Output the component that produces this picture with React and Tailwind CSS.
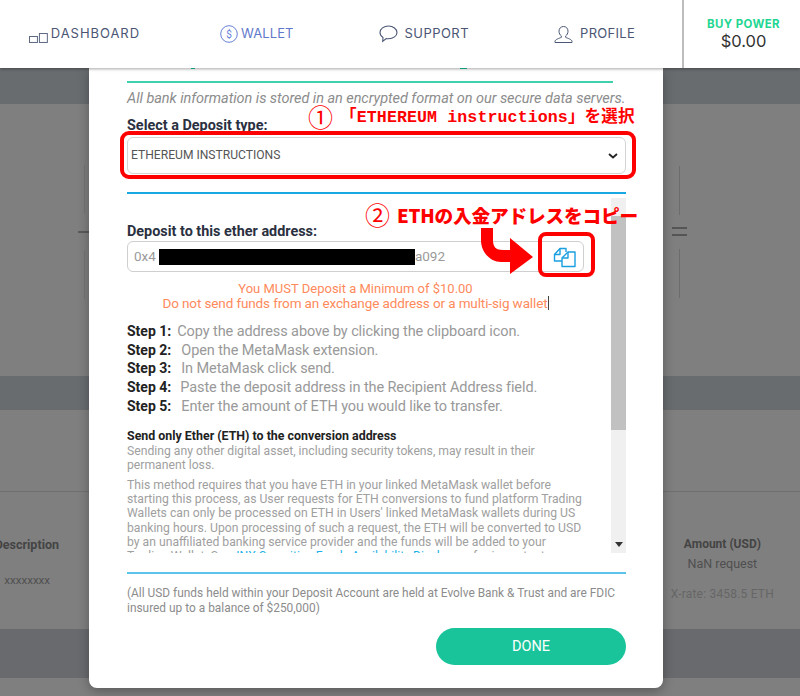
import React from "react";

const F = { fontFamily: '"Roboto", "Liberation Sans", sans-serif' };
const NAV = { fontFamily: '"Inter", "Open Sans", sans-serif' };
const CJK = { fontFamily: '"Liberation Mono", "Noto Sans CJK JP", monospace' };

function NavItem({ icon, label, className, color, track }) {
  return (
    <div className={`flex items-center ${className}`}>
      {icon}
      <span className={`text-[13px] ${track} ${color}`} style={NAV}>{label}</span>
    </div>
  );
}

function Step({ n, text, gap }) {
  return (
    <div className="h-[18.7px] leading-[18.7px] whitespace-nowrap">
      <span className="font-bold text-[#222] text-[14px]">Step {n}:</span>
      <span className={`text-[#999] text-[14.5px] tracking-[-0.1px] ${gap}`}>{text}</span>
    </div>
  );
}

export default function App() {
  return (
    <div className="relative w-[800px] h-[696px] overflow-hidden bg-[#7f7f7f]" style={F}>
      {/* Header */}
      <header className="relative z-20 h-[68px] bg-white flex shadow-[0_1px_3px_rgba(0,0,0,0.35)]">
        <div className="flex-1 flex items-center pl-[29px]">
          <NavItem
            className="w-[111px]"
            color="text-[#4a5674]"
            track="tracking-[0.95px]"
            label="DASHBOARD"
            icon={
              <svg width="22" height="14" viewBox="0 0 22 14" fill="none" stroke="#5b6680" strokeWidth="1" className="mt-[7px]">
                <rect x="0.5" y="5.5" width="8" height="6" />
                <rect x="10.5" y="2.5" width="8" height="9" />
              </svg>
            }
          />
          <NavItem
            className="ml-[80px]"
            color="text-[#5f78cc]"
            track="tracking-[0.1px]"
            label="WALLET"
            icon={
              <svg width="21" height="18" viewBox="0 0 21 18" fill="none" stroke="#6680d6" strokeWidth="1">
                <circle cx="9" cy="9" r="8.3" />
                <text x="9" y="12.5" fontSize="10" fill="#6680d6" stroke="none" textAnchor="middle">$</text>
              </svg>
            }
          />
          <NavItem
            className="ml-[85px]"
            color="text-[#4a5674]"
            track="tracking-[0.45px]"
            label="SUPPORT"
            icon={
              <svg width="26" height="18" viewBox="0 0 26 18" fill="none" stroke="#4a5674" strokeWidth="1.1">
                <path d="M9.5 1C4.8 1 1 3.8 1 7.5c0 2 1.2 3.8 3 5l-.3 3.8 3.6-2.8c.7.1 1.4.2 2.2.2 4.7 0 8.5-2.8 8.5-6.2S14.200 1 9.500 1z" />
              </svg>
            }
          />
          <NavItem
            className="ml-[85px]"
            color="text-[#4a5674]"
            track="tracking-[0.3px]"
            label="PROFILE"
            icon={
              <svg width="26" height="19" viewBox="0 0 26 19" fill="none" stroke="#4a5674" strokeWidth="1">
                <path d="M9.500 1.500c-2.700 0-4.500 2-4.500 4.700 0 2.100 1 3.800 2.300 4.700v1.500c-2 .9-6.300 2-6.300 4v1.100h17v-1.100c0-2-4.300-3.100-6.300-4v-1.500c1.300-.9 2.300-2.600 2.300-4.700 0-2.700-1.800-4.700-4.500-4.700z" />
              </svg>
            }
          />
        </div>
        <div className="w-[118px] border-l-[2px] border-[#bdbdbd] flex flex-col items-center justify-center pl-[3px]">
          <span className="text-[11.5px] leading-[13px] font-bold tracking-[0.35px] text-[#1fd692]" style={NAV}>BUY POWER</span>
          <span className="text-[16.5px] leading-[20px] text-[#333]" style={NAV}>$0.00</span>
        </div>
      </header>

      {/* Dimmed page behind the modal */}
      <div className="flex flex-col h-[628px]">
        <div className="h-[36px] bg-[#696c6f]" />
        <div className="h-[272px] flex items-center justify-between pl-[78px] pr-[113px] pb-[16px]">
          <div className="flex flex-col items-end">
            <div className="w-px h-[49px] bg-[#747474] mr-[4px]" />
            <div className="w-[11px] h-[2px] bg-[#5a5a5a] my-[17px]" />
            <div className="w-px h-[49px] bg-[#747474] mr-[4px]" />
          </div>
          <div className="flex flex-col items-center">
            <div className="w-px h-[49px] bg-[#6c6c6c]" />
            <div className="w-[15px] h-[2px] bg-[#555] mt-[12px] mb-[5px]" />
            <div className="w-[15px] h-[2px] bg-[#555] mb-[13px]" />
            <div className="w-px h-[49px] bg-[#6c6c6c]" />
          </div>
        </div>
        <div className="h-[34px] bg-[#696c6f]" />
        <div className="h-[82px] border-b border-[#707070]" />
        <div className="h-[137px] flex justify-between pr-[26px] relative">
          <div className="w-[59px] overflow-hidden flex flex-col items-end pt-[45px]">
            <span className="text-[12.5px] leading-[15px] font-bold text-[#444] whitespace-nowrap">Description</span>
            <span className="text-[11.5px] leading-[15px] text-[#4f4f4f] mt-[21px] mr-[9px]">xxxxxxxx</span>
          </div>
          <div className="flex flex-col items-center pt-[45px]">
            <span className="text-[12px] leading-[15px] font-bold text-[#444]">Amount (USD)</span>
            <span className="text-[12.5px] leading-[16px] text-[#4f4f4f] mt-[4px]">NaN request</span>
            <span className="text-[12px] leading-[16px] text-[#666] mt-[14px] tracking-[0.2px]">X-rate: 3458.5 ETH</span>
          </div>
        </div>
        <div className="h-[49px] bg-[#686a6d] shrink-0" />
      </div>

      {/* Modal */}
      <div className="absolute z-10 left-[89px] top-[68px] w-[574px] h-[620px] bg-white rounded-b-[8px] shadow-[0_3px_12px_rgba(0,0,0,0.3)] pl-[38px] pr-[37px] flex flex-col">
        <div className="h-[2px] relative -ml-[38px]">
          <span className="absolute left-[102px] top-0 w-[4px] h-px bg-[#1dc8a0]" />
          <span className="absolute left-[371px] top-0 w-[7px] h-px bg-[#1dc8a0]" />
        </div>
        <div className="h-[2px] mt-[11px] w-[486px] bg-[#3fd0ae]" />
        <p className="mt-[7px] text-[14.5px] tracking-[-0.05px] leading-[17px] italic text-[#8c8c8c] whitespace-nowrap">
          All bank information is stored in an encrypted format on our secure data servers.
        </p>
        <label className="mt-[10px] text-[14.4px] leading-[17px] font-bold text-[#2a3040]">Select a Deposit type:</label>
        <div className="mt-[3px] h-[37px] rounded-[6px] border border-[#d4d4d4] flex items-center justify-between pl-[3px] pr-[7px]">
          <span className="text-[12.1px] text-[#555]">ETHEREUM INSTRUCTIONS</span>
          <svg width="10" height="6" viewBox="0 0 10 6" fill="none" stroke="#222" strokeWidth="1.8">
            <path d="M1 1l4 3.500L9 1" />
          </svg>
        </div>
        <div className="mt-[18px] h-[2px] bg-[#1aa8e2]" />

        {/* Scroll area */}
        <div className="mt-[4px] h-[355px] flex overflow-hidden">
          <div className="w-[484px] overflow-hidden pt-[25px]">
            <div className="text-[14.4px] leading-[17px] font-bold text-[#2a3040]">Deposit to this ether address:</div>
            <div className="mt-[1px] w-[457px] h-[31px] rounded-[6px] border border-[#cfcfcf] flex items-center justify-between pl-[6px] pr-[6px]">
              <span className="text-[13.5px] text-[#9a9a9a] flex items-center">
                0x4
                <span className="inline-block w-[256px] h-[16px] bg-black ml-[3px]" />
                a092
              </span>
              <svg width="24" height="22" viewBox="0 0 24 22" fill="none" stroke="#1a9fe0" strokeWidth="1.4" strokeLinejoin="round">
                <path d="M9 15H1.500V8.500L7 2.500h6V6" />
                <path d="M7 2.500V8.500H1.500" />
                <path d="M22 6H15l-6 6v8.500h13z" />
                <path d="M15 6v6H9" />
              </svg>
            </div>
            <div className="mt-[9px] w-[457px] text-center leading-[15px] text-[#ff8a5c] whitespace-nowrap">
              <div className="text-[13px]">You MUST Deposit a Minimum of $10.00</div>
              <div className="text-[13.5px] tracking-[-0.12px]">
                Do not send funds from an exchange address or a multi-sig wallet
                <span className="inline-block w-px h-[14px] bg-[#444] align-[-2px]" />
              </div>
            </div>
            <div className="mt-[11px]">
              <Step n="1" text="Copy the address above by clicking the clipboard icon." gap="ml-[6px]" />
              <Step n="2" text="Open the MetaMask extension." gap="ml-[10px]" />
              <Step n="3" text="In MetaMask click send." gap="ml-[10px]" />
              <Step n="4" text="Paste the deposit address in the Recipient Address field." gap="ml-[9px]" />
              <Step n="5" text="Enter the amount of ETH you would like to transfer." gap="ml-[10px]" />
            </div>
            <div className="mt-[14px] w-[470px] text-[12.2px] leading-[14.200px] text-[#a0a0a0] whitespace-nowrap">
              <div className="font-bold text-[#222] text-[12.4px]">Send only Ether (ETH) to the conversion address</div>
              <p>Sending any other digital asset, including security tokens, may result in their<br />permanent loss.</p>
              <p className="mt-[6px]">
                This method requires that you have ETH in your linked MetaMask wallet before<br />
                starting this process, as User requests for ETH conversions to fund platform Trading<br />
                Wallets can only be processed on ETH in Users' linked MetaMask wallets during US<br />
                banking hours. Upon processing of such a request, the ETH will be converted to USD<br />
                by an unaffiliated banking service provider and the funds will be added to your<br />
                Trading Wallet. See, <span className="text-[#1ab0e8]">INX Securities Funds Availability Disclosure</span> for important
              </p>
            </div>
          </div>
          <div className="w-[15px] bg-[#f0f0f0] flex flex-col items-center">
            <div className="h-[18px]" />
            <div className="w-full h-[214px] bg-[#c1c1c1]" />
            <div className="flex-1 flex items-end pb-[6px]">
              <svg width="8" height="5" viewBox="0 0 8 5" fill="#333"><path d="M0 0h8L4 5z" /></svg>
            </div>
          </div>
        </div>

        <div className="mt-[19px] h-[2px] bg-[#5cc4ea]" />
        <p className="mt-[12px] text-[11.9px] leading-[14.500px] text-[#8c8c8c] whitespace-nowrap">
          (All USD funds held within your Deposit Account are held at Evolve Bank &amp; Trust and are FDIC<br />
          insured up to a balance of $250,000)
        </p>
        <div className="mt-[13px] self-end w-[190px] h-[37px] rounded-full bg-[#1ac49b] flex items-center justify-center text-white text-[14.500px]">
          DONE
        </div>
      </div>

      {/* Red annotations */}
      <div className="absolute z-30 left-[120px] top-[131px] w-[516px] h-[48px] border-[4px] border-[#f00] rounded-[9px]" />
      <div className="absolute z-30 left-[538px] top-[232px] w-[57px] h-[45px] border-[4px] border-[#f00] rounded-[8px]" />
      <div className="absolute z-30 left-[308px] top-[103px] flex items-center whitespace-nowrap text-[#f00] font-bold h-[28px]" style={CJK}>
        <span className="text-[25px] font-normal" style={{ fontFamily: '"Noto Sans CJK JP", sans-serif' }}>①</span>
        <span className="ml-[7px] mt-[3px] text-[16.6px] tracking-[0.1px]">「ETHEREUM instructions」を選択</span>
      </div>
      <div className="absolute z-30 left-[365px] top-[201px] flex items-center whitespace-nowrap text-[#f00] h-[28px]" style={{ fontFamily: '"Noto Sans CJK JP", sans-serif' }}>
        <span className="text-[25px] font-normal">②</span>
        <span className="ml-[7px] text-[18.7px] font-black tracking-[-0.2px]">ETHの入金アドレスをコピー</span>
      </div>
      <svg className="absolute z-30 left-[478px] top-[226px]" width="58" height="50" viewBox="0 0 58 50" fill="#f00">
        <path d="M3 2h12v12c0 7 3 10 10 10h7V12l23 19-23 17V36h-9C13 36 3 27 3 14z" />
      </svg>
    </div>
  );
}
